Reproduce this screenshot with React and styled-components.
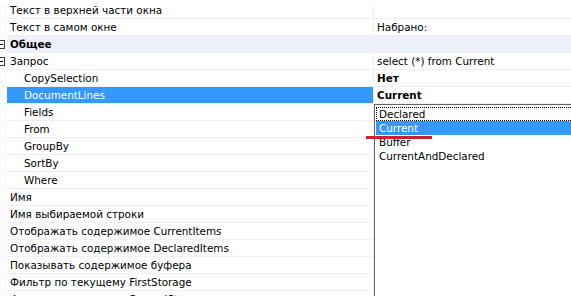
import React from 'react'
import styled, { createGlobalStyle } from 'styled-components'

const GlobalStyle = createGlobalStyle`
    body {
        margin: 0;
        background: #ffffff;
        font-family: "DejaVu Sans", "Liberation Sans", sans-serif;
        font-size: 10.4px;
        color: #000000;
        overflow: hidden;
    }
`
const Grid = styled.div`
    position: relative;
    width: 571px;
    height: 296px;
    padding-top: 2px;
    box-sizing: border-box;
    overflow: hidden;
`
const Row = styled.div`
    display: grid;
    grid-template-columns: 7px 367px 1fr;
    height: 17px;
`
const Gutter = styled.div`
    position: relative;
    background: #fbfbfd;
    overflow: hidden;
    display: flex;
    align-items: center;
`
const Cell = styled.div`
    box-sizing: border-box;
    height: 17px;
    padding-top: 1px;
    line-height: 15px;
    white-space: nowrap;
    overflow: hidden;
    border-bottom: 1px solid #f0f0f0;
`
const NameCell = styled(Cell)`
    padding-left: ${({level}) => 3 + level * 14}px;
    border-right: 1px solid ${({category}) => category ? '#edf0f8' : '#f0f0f0'};
    background: ${({selected, category}) => selected ? '#3399ff' : category ? '#edf0f8' : '#ffffff'};
    color: ${({selected}) => selected ? '#ffffff' : '#000000'};
    font-weight: ${({category}) => category ? 'bold' : 'normal'};
`
const ValueCell = styled(Cell)`
    padding-left: 3px;
    background: ${({category}) => category ? '#edf0f8' : '#ffffff'};
    font-weight: ${({bold}) => bold ? 'bold' : 'normal'};
`
const Expander = styled.svg`
    margin-left: -4px;
    flex: none;
`
const DropList = styled.div`
    position: absolute;
    left: 374px;
    top: 104px;
    right: -4px;
    bottom: -4px;
    background: #ffffff;
    border-left: 1px solid #646464;
    border-top: 1px solid #646464;
    padding-top: 2px;
`
const Item = styled.div`
    box-sizing: border-box;
    height: 14px;
    line-height: 13px;
    margin-left: 1px;
    padding-left: 2px;
    border: 1px ${({focused}) => focused ? 'dotted #000000' : 'solid transparent'};
    background: ${({active}) => active ? '#3399ff' : 'transparent'};
    color: ${({active}) => active ? '#ffffff' : '#000000'};
`
const Marker = styled.div`
    position: absolute;
    left: 366px;
    top: 136px;
    width: 66px;
    height: 3px;
    background: #cf1f2b;
`

const rows = [
    { name: 'Текст в верхней части окна' },
    { name: 'Текст в самом окне', value: 'Набрано:' },
    { name: 'Общее', category: true, expander: true },
    { name: 'Запрос', value: 'select (*) from Current', expander: true },
    { name: 'CopySelection', value: 'Нет', bold: true, level: 1 },
    { name: 'DocumentLines', value: 'Current', bold: true, level: 1, selected: true },
    { name: 'Fields', level: 1 },
    { name: 'From', level: 1 },
    { name: 'GroupBy', level: 1 },
    { name: 'SortBy', level: 1 },
    { name: 'Where', level: 1 },
    { name: 'Имя' },
    { name: 'Имя выбираемой строки' },
    { name: 'Отображать содержимое CurrentItems' },
    { name: 'Отображать содержимое DeclaredItems' },
    { name: 'Показывать содержимое буфера' },
    { name: 'Фильтр по текущему FirstStorage' },
    { name: 'Фильтр по текущему SecondStorage' },
]

const options = ['Declared', 'Current', 'Buffer', 'CurrentAndDeclared']

function App() {
  return (
    <Grid>
        <GlobalStyle />
        {
            rows.map((r, idx) => (
                <Row key={idx}>
                    <Gutter>
                        {r.expander && (
                            <Expander width="9" height="9" viewBox="0 0 9 9">
                                <rect x="0.5" y="0.5" width="8" height="8" fill="#fff" stroke="#3c3c3c"/>
                                <line x1="2" y1="4.5" x2="7" y2="4.5" stroke="#000"/>
                            </Expander>
                        )}
                    </Gutter>
                    <NameCell level={r.level || 0} selected={r.selected} category={r.category}>{r.name}</NameCell>
                    <ValueCell bold={r.bold} category={r.category}>{r.value}</ValueCell>
                </Row>
            ))
        }
        <DropList>
            {options.map((o, idx) => (
                <Item key={o} focused={idx === 0} active={idx === 1}>{o}</Item>
            ))}
        </DropList>
        <Marker />
    </Grid>
  )
}

export default App
